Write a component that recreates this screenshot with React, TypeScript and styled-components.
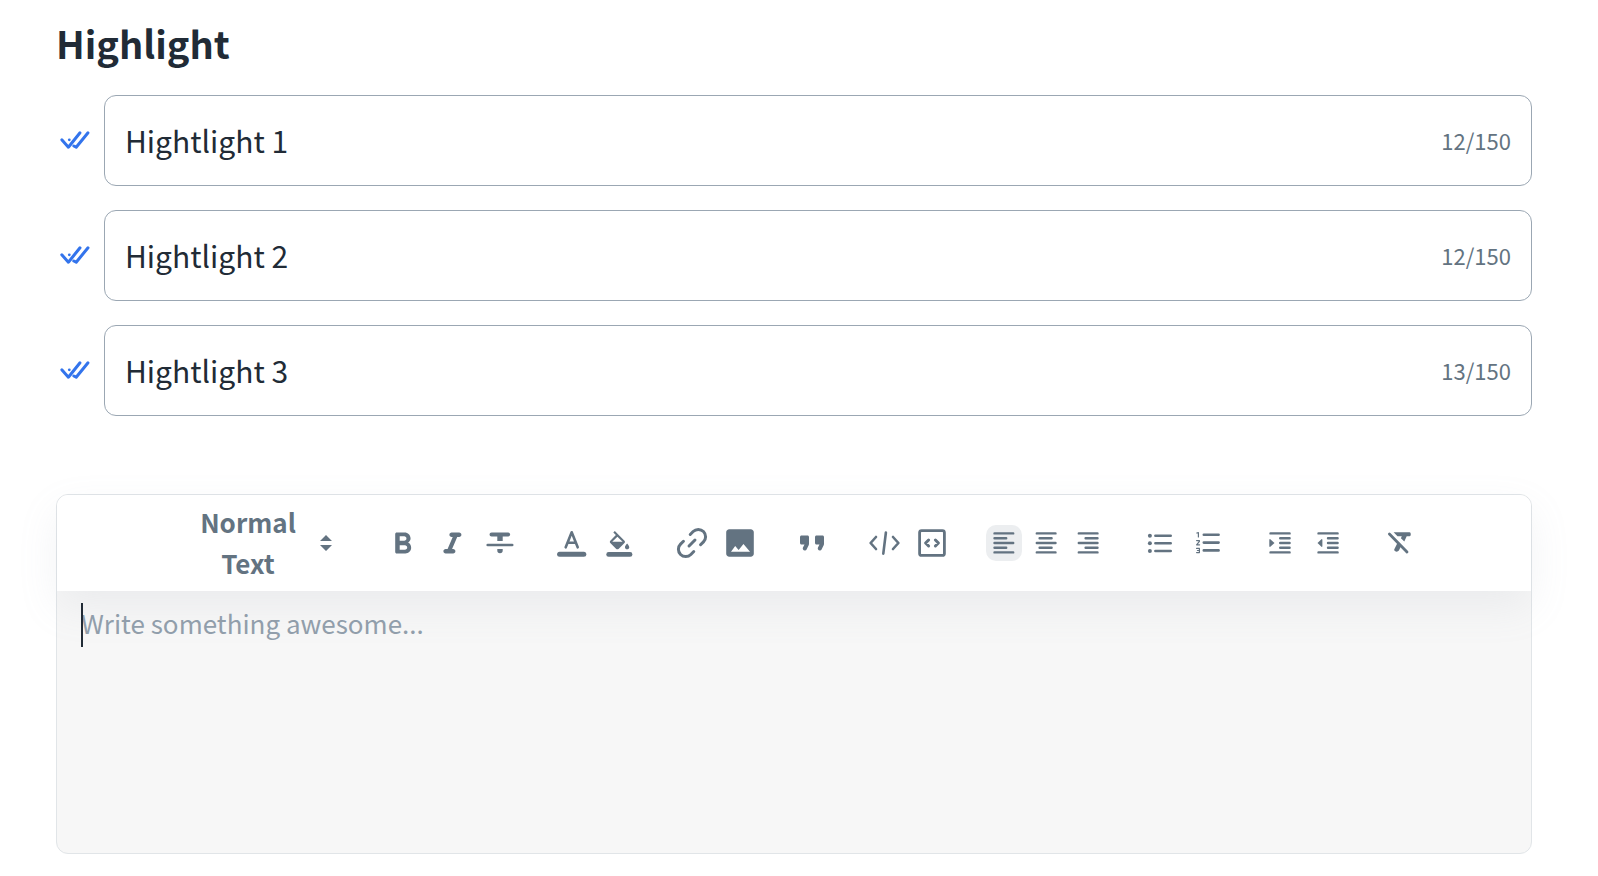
import React, { useState } from "react";
import styled, { createGlobalStyle } from "styled-components";

const color = {
  text: "#212b36",
  secondary: "#637381",
  placeholder: "#919eab",
  inputBorder: "#9ba7b3",
  editorBorder: "#e1e5e8",
  editorFill: "#f7f7f7",
  active: "#eceef0",
  accent: "#3374ec",
};

const GlobalStyle = createGlobalStyle`
  *, *::before, *::after { box-sizing: border-box; }
  body {
    margin: 0;
    background: #ffffff;
    color: ${color.text};
    font-family: "Noto Sans CJK SC", "Noto Sans", sans-serif;
  }
  button, input, textarea, select { font: inherit; color: inherit; }
`;

const Page = styled.main`
  padding: 17px 66px 22px 56px;
`;

const Title = styled.h1`
  margin: 0 0 26px;
  font-size: 38px;
  line-height: 52px;
  font-weight: 700;
`;

const HighlightList = styled.ul`
  display: flex;
  flex-direction: column;
  gap: 24px;
  margin: 0 0 78px;
  padding: 0;
  list-style: none;
`;

const HighlightRow = styled.li`
  display: flex;
  align-items: center;
  gap: 12px;
`;

const Field = styled.label`
  flex: 1;
  display: flex;
  align-items: center;
  height: 91px;
  padding: 0 20px 2px;
  border: 1px solid ${color.inputBorder};
  border-radius: 12px;
`;

const FieldInput = styled.input`
  flex: 1;
  min-width: 0;
  height: 48px;
  padding: 0;
  border: 0;
  outline: 0;
  background: transparent;
  font-size: 30px;
`;

const Counter = styled.span`
  color: ${color.secondary};
  font-size: 22px;
  line-height: 32px;
`;

const Editor = styled.section`
  border: 1px solid ${color.editorBorder};
  border-radius: 12px;
  background: ${color.editorFill};
`;

const Toolbar = styled.div`
  display: flex;
  justify-content: center;
  align-items: center;
  gap: 24px;
  min-height: 96px;
  padding: 6px 12px;
  border-radius: 11px 11px 0 0;
  background: #ffffff;
  box-shadow: 0 16px 40px rgba(145, 158, 171, 0.12);
  color: ${color.secondary};
`;

const Picker = styled.div`
  display: grid;
  grid-template-columns: 1fr 36px;
  align-items: center;
  width: 192px;
  padding: 0 12px 0 24px;
`;

const PickerValue = styled.span`
  grid-area: 1 / 1;
  padding-bottom: 2px;
  font-size: 26px;
  line-height: 41px;
  font-weight: 700;
  text-align: center;
`;

const PickerSelect = styled.select`
  grid-area: 1 / 1 / 2 / 3;
  width: 100%;
  height: 100%;
  opacity: 0;
  cursor: pointer;
`;

const Group = styled.div<{ $compact?: boolean }>`
  display: flex;
  gap: ${(p) => (p.$compact ? "6px" : "0")};
  padding: ${(p) => (p.$compact ? "0 6px" : "0")};
`;

const Tool = styled.button<{ $compact?: boolean; $active?: boolean }>`
  display: flex;
  align-items: center;
  justify-content: center;
  width: ${(p) => (p.$compact ? "36px" : "48px")};
  height: 36px;
  padding: 0;
  border: 0;
  border-radius: 10px;
  background: ${(p) => (p.$active ? color.active : "transparent")};
  cursor: pointer;
`;

const Glyph = styled.svg`
  display: block;
  flex: none;
  width: 36px;
  height: 36px;
  fill: none;
  stroke: none;
`;

const PickerArrows = styled(Glyph)`
  grid-area: 1 / 2;
`;

const Body = styled.div`
  position: relative;
  display: flex;
  height: 262px;
  padding: 10px 24px;
`;

const Content = styled.textarea`
  flex: 1;
  min-width: 0;
  padding: 0;
  border: 0;
  outline: 0;
  resize: none;
  background: transparent;
  font-size: 26px;
  line-height: 44px;

  &::placeholder {
    color: ${color.placeholder};
    opacity: 1;
  }
`;

const Caret = styled.span`
  position: absolute;
  top: 12px;
  left: 24px;
  width: 2px;
  height: 44px;
  background: ${color.text};
`;

type LineProps = { d: string; w?: number };
const Line = ({ d, w = 3 }: LineProps) => (
  <path
    d={d}
    fill="none"
    stroke="currentColor"
    strokeWidth={w}
    strokeLinecap="round"
    strokeLinejoin="round"
  />
);
const Shape = ({ d, transform }: { d: string; transform?: string }) => (
  <path d={d} fill="currentColor" fillRule="evenodd" transform={transform} />
);

const CheckIcon = () => (
  <Glyph viewBox="0 0 36 36" color={color.accent} aria-hidden="true">
    <Line d="M5.8 16.8L12.4 24.2L24 9.8" />
    <Line d="M17.8 23L20.2 24.2L32 9.8" />
    <circle cx="13.3" cy="16.8" r="1.4" fill="currentColor" />
  </Glyph>
);

const icons: Record<string, React.ReactNode> = {
  bold: (
    <Shape
      transform="translate(-1.3 1.4) scale(1.5)"
      d="M15.6 10.79c.97-.67 1.65-1.77 1.65-2.79 0-2.26-1.75-4-4-4H8c-.55 0-1 .45-1 1v12c0 .55.45 1 1 1h5.78c2.07 0 3.85-1.69 3.86-3.79.02-1.55-.85-2.88-2.04-3.42zM10 6.5h3c.83 0 1.5.67 1.5 1.5s-.67 1.5-1.5 1.5h-3v-3zm3.5 9H10v-3h3.5c.83 0 1.5.67 1.5 1.5s-.67 1.5-1.5 1.5z"
    />
  ),
  italic: (
    <Shape
      transform="translate(0.4 1.4) scale(1.5)"
      d="M10 5.5c0 .83.67 1.5 1.5 1.5h.71l-3.42 8H7.5c-.83 0-1.5.67-1.5 1.5S6.67 18 7.5 18h5c.83 0 1.5-.67 1.5-1.5s-.67-1.5-1.5-1.5h-.71l3.42-8h1.29c.83 0 1.5-.67 1.5-1.5S17.33 4 16.5 4h-5c-.83 0-1.5.67-1.5 1.5z"
    />
  ),
  strike: (
    <>
      <Line w={4.2} d="M9.6 9.5H26" />
      <Shape d="M15.3 10H20.7V16H15.3ZM15.3 24H20.7V25.6A2.7 2.7 0 0 1 15.3 25.6Z" />
      <Line w={2.6} d="M5.7 20H30.2" />
    </>
  ),
  textColor: (
    <>
      <Line w={2.6} d="M11.7 22.3L17.7 7.3L23.7 22.3M13.7 17.7H21.7" />
      <Line w={5} d="M5.6 29.2H29.8" />
    </>
  ),
  fillColor: (
    <>
      <Shape
        transform="translate(4.6 6) scale(1.08)"
        d="M16.56 8.94L7.62 0 6.21 1.41l2.38 2.38-5.15 5.15c-.59.59-.59 1.54 0 2.12l5.5 5.5c.29.29.68.44 1.06.44s.77-.15 1.06-.44l5.5-5.5c.59-.58.59-1.53 0-2.12zM5.21 10L10 5.21 14.79 10H5.21zM19 11.5s-2 2.17-2 3.5c0 1.1.9 2 2 2s2-.9 2-2c0-1.33-2-3.5-2-3.5z"
      />
      <Line w={4.6} d="M6.6 29.4H28.1" />
    </>
  ),
  link: (
    <g transform="rotate(-45 18 18)">
      <Line d="M22.8 10.7H26.9A7.3 7.3 0 0 1 26.9 25.3H22.8" />
      <Line d="M13.2 10.7H9.1A7.3 7.3 0 0 0 9.1 25.3H13.2" />
      <Line d="M13.8 18H22.2" />
    </g>
  ),
  image: (
    <Shape
      transform="scale(1.5)"
      d="M21.2 19.2V4.8c0-1.1-.9-2-2-2H4.8c-1.1 0-2 .9-2 2v14.4c0 1.1.9 2 2 2h14.4c1.1 0 2-.9 2-2zM8.8 14l2.3 2.6L14.3 12.6l4.4 5.3H6z"
    />
  ),
  quote: (
    <Shape
      transform="scale(1.5)"
      d="M7.17 17c.51 0 .98-.29 1.2-.74l1.42-2.84c.14-.28.21-.58.21-.89V8c0-.55-.45-1-1-1H5c-.55 0-1 .45-1 1v4c0 .55.45 1 1 1h2l-1.03 2.06c-.45.89.2 1.94 1.2 1.94zm10 0c.51 0 .98-.29 1.2-.74l1.42-2.84c.14-.28.21-.58.21-.89V8c0-.55-.45-1-1-1h-4c-.55 0-1 .45-1 1v4c0 .55.45 1 1 1h2l-1.03 2.06c-.45.89.2 1.94 1.2 1.94z"
    />
  ),
  code: (
    <>
      <Line w={2.6} d="M10 12L4.6 18L10 24M27 12L32.4 18L27 24" />
      <Line w={2.6} d="M19.9 7.5L17.3 28.7" />
    </>
  ),
  codeBlock: (
    <>
      <rect x="5.6" y="5.6" width="24.8" height="24.8" rx="2" stroke="currentColor" strokeWidth="2.8" />
      <Line d="M14.6 15L11.6 18L14.6 21M21.4 15L24.4 18L21.4 21" />
    </>
  ),
  alignLeft: <Line w={2.4} d="M8.5 8.4H27.2M8.5 13.2H20.2M8.5 18H27.2M8.5 22.8H20.2M8.5 27.4H27.2" />,
  alignCenter: <Line w={2.4} d="M8.8 8.4H27.5M11.6 13.2H23.6M8.8 18H27.5M11.6 22.8H23.6M8.8 27.4H27.5" />,
  alignRight: <Line w={2.4} d="M8.8 8.4H27.5M15.6 13.2H27.5M8.8 18H27.5M15.6 22.8H27.5M8.8 27.4H27.5" />,
  bullets: (
    <>
      <circle cx="7.9" cy="10.7" r="2" fill="currentColor" />
      <circle cx="7.9" cy="18.3" r="2" fill="currentColor" />
      <circle cx="7.9" cy="26" r="2" fill="currentColor" />
      <Line w={2.6} d="M13.4 10.7H28.7M13.4 18.3H28.7M13.4 26H28.7" />
    </>
  ),
  numbers: (
    <>
      <Line w={2.6} d="M13.8 9.8H28.6M13.8 17.6H28.6M13.8 25.4H28.6" />
      <Line w={1.2} d="M6.8 8L8.4 7.6V12M6.6 15.6H9.4V16.4L6.6 19.8H9.6M6.6 23.4H9.4V27.6H6.6M7.4 25.5H9.4" />
    </>
  ),
  indent: (
    <>
      <Line w={2.4} d="M8.5 8.4H27.6M18.2 13.2H27.6M18.2 18H27.6M18.2 22.8H27.6M8.5 27.4H27.6" />
      <Shape d="M7.3 14.4L8 14L12.5 18L8 22L7.3 21.6Z" />
    </>
  ),
  outdent: (
    <>
      <Line w={2.4} d="M8.5 8.4H27.6M18 13.2H27.6M18 18H27.6M18 22.8H27.6M8.5 27.4H27.6" />
      <Shape d="M12.4 14.4L11.7 14L7.5 18L11.7 22L12.4 21.6Z" />
    </>
  ),
  clear: (
    <>
      <Shape d="M11.6 7.3H27.6Q28.8 7.3 28.8 9.2T27.6 11.2H24.7L22.3 16.6L18.9 13.2L19.8 11.2H15.5Z" />
      <Shape d="M15.6 17.8L19 21.2L16.9 25.6Q15.8 27 13.8 26.6Q12 26 12.2 24.6Z" />
      <Line w={2.8} d="M7.4 9L25 27" />
    </>
  ),
};

type Item = { icon: string; label: string };
const groups: { compact?: boolean; items: Item[] }[] = [
  {
    items: [
      { icon: "bold", label: "Bold" },
      { icon: "italic", label: "Italic" },
      { icon: "strike", label: "Strikethrough" },
    ],
  },
  {
    items: [
      { icon: "textColor", label: "Text color" },
      { icon: "fillColor", label: "Background color" },
    ],
  },
  {
    items: [
      { icon: "link", label: "Link" },
      { icon: "image", label: "Image" },
    ],
  },
  { items: [{ icon: "quote", label: "Quote" }] },
  {
    items: [
      { icon: "code", label: "Inline code" },
      { icon: "codeBlock", label: "Code block" },
    ],
  },
  {
    compact: true,
    items: [
      { icon: "alignLeft", label: "Align left" },
      { icon: "alignCenter", label: "Align center" },
      { icon: "alignRight", label: "Align right" },
    ],
  },
  {
    items: [
      { icon: "bullets", label: "Bulleted list" },
      { icon: "numbers", label: "Numbered list" },
    ],
  },
  {
    items: [
      { icon: "indent", label: "Increase indent" },
      { icon: "outdent", label: "Decrease indent" },
    ],
  },
  { items: [{ icon: "clear", label: "Clear formatting" }] },
];

const highlights = [
  { text: "Hightlight 1", count: 12 },
  { text: "Hightlight 2", count: 12 },
  { text: "Hightlight 3", count: 13 },
];

export default function App() {
  const [format, setFormat] = useState("Normal Text");
  const [align, setAlign] = useState("alignLeft");
  const [content, setContent] = useState("");

  return (
    <>
      <GlobalStyle />
      <Page>
        <Title>Highlight</Title>
        <HighlightList>
          {highlights.map((h) => (
            <HighlightRow key={h.text}>
              <CheckIcon />
              <Field>
                <FieldInput defaultValue={h.text} maxLength={150} aria-label={h.text} />
                <Counter>{h.count}/150</Counter>
              </Field>
            </HighlightRow>
          ))}
        </HighlightList>

        <Editor>
          <Toolbar role="toolbar" aria-label="Formatting">
            <Picker>
              <PickerValue aria-hidden="true">{format}</PickerValue>
              <PickerArrows viewBox="0 0 36 36" aria-hidden="true">
                <Shape d="M18 10L24 16H12ZM18 26L24 20H12Z" />
              </PickerArrows>
              <PickerSelect
                aria-label="Text style"
                value={format}
                onChange={(e) => setFormat(e.target.value)}
              >
                <option>Normal Text</option>
                <option>Heading 1</option>
                <option>Heading 2</option>
              </PickerSelect>
            </Picker>
            {groups.map((group) => (
              <Group key={group.items[0].icon} $compact={group.compact}>
                {group.items.map((item) => (
                  <Tool
                    key={item.icon}
                    type="button"
                    aria-label={item.label}
                    $compact={group.compact}
                    $active={item.icon === align}
                    onClick={() => group.compact && setAlign(item.icon)}
                  >
                    <Glyph viewBox="0 0 36 36" aria-hidden="true">
                      {icons[item.icon]}
                    </Glyph>
                  </Tool>
                ))}
              </Group>
            ))}
          </Toolbar>
          <Body>
            <Content
              aria-label="Content"
              placeholder="Write something awesome..."
              value={content}
              onChange={(e) => setContent(e.target.value)}
            />
            {content === "" && <Caret />}
          </Body>
        </Editor>
      </Page>
    </>
  );
}
